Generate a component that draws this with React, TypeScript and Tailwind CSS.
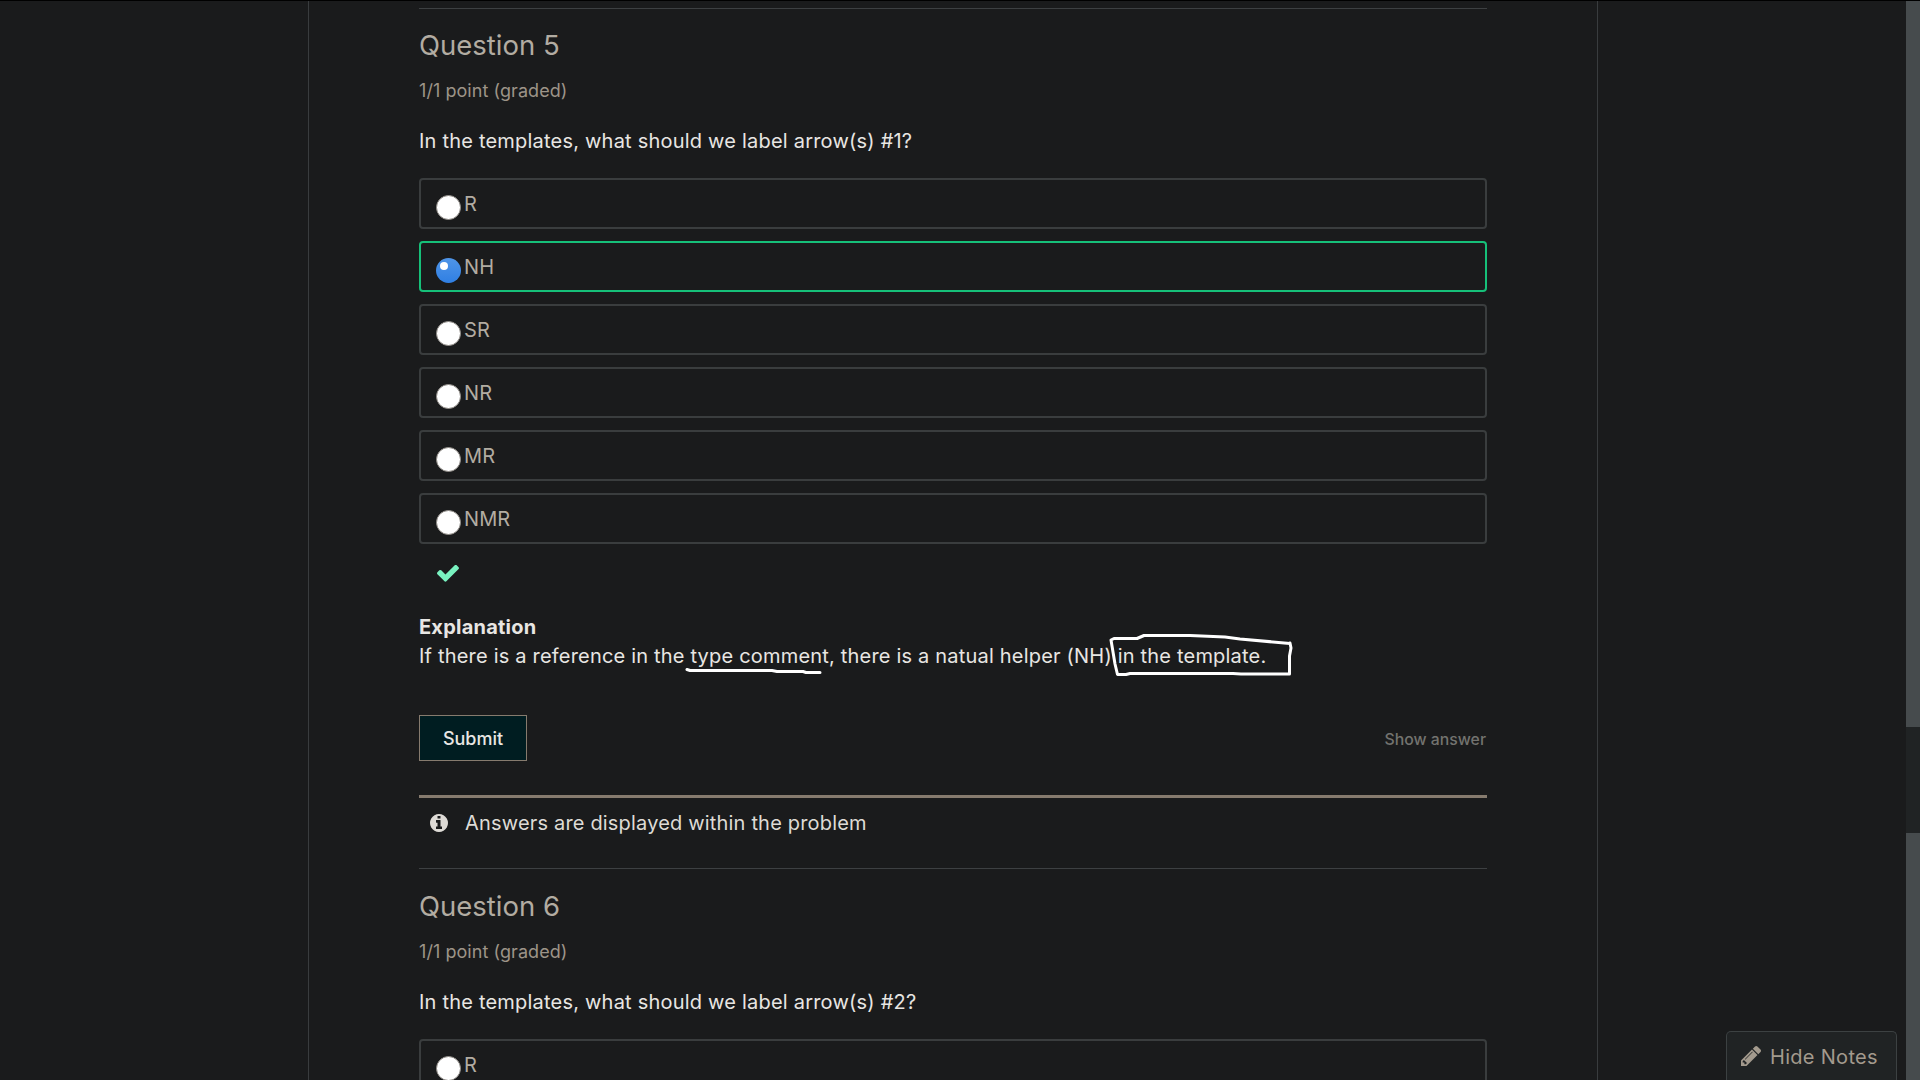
import React from "react";

function CheckIcon({ className }: { className: string }) {
  return (
    <svg className={className} viewBox="121 370 1550 1152" fill="currentColor">
      <path d="M1671 566q0 40-28 68l-724 724-136 136q-28 28-68 28t-68-28l-136-136-362-362q-28-28-28-68t28-68l136-136q28-28 68-28t68 28l294 295 656-657q28-28 68-28t68 28l136 136q28 28 28 68z" />
    </svg>
  );
}

function InfoIcon({ className }: { className: string }) {
  return (
    <svg className={className} viewBox="128 128 1536 1536" fill="currentColor">
      <path d="M1152 1376v-160q0-14-9-23t-23-9h-96v-512q0-14-9-23t-23-9h-320q-14 0-23 9t-9 23v160q0 14 9 23t23 9h96v320h-96q-14 0-23 9t-9 23v160q0 14 9 23t23 9h448q14 0 23-9t9-23zm-128-896v-160q0-14-9-23t-23-9h-192q-14 0-23 9t-9 23v160q0 14 9 23t23 9h192q14 0 23-9t9-23zm640 416q0 209-103 385.5t-279.500 279.500-385.500 103-385.500-103-279.500-279.500-103-385.500 103-385.500 279.500-279.500 385.500-103 385.500 103 279.500 279.500 103 385.500z" />
    </svg>
  );
}

function PencilIcon({ className }: { className: string }) {
  return (
    <svg className={className} viewBox="128 149 1515 1515" fill="currentColor">
      <path d="M491 1536l91-91-235-235-91 91v107h128v128h107zm523-928q0-22-22-22-10 0-17 7l-542 542q-7 7-7 17 0 22 22 22 10 0 17-7l542-542q7-7 7-17zm-54-192l416 416-832 832h-416v-416zm683 96q0 53-37 90l-166 166-416-416 166-165q36-38 90-38 53 0 91 38l235 234q37 39 37 91z" />
    </svg>
  );
}

function Option({ label, selected = false }: { label: string; selected?: boolean }) {
  return (
    <label
      className={
        "flex h-[51px] shrink-0 items-start rounded-[4px] border-2 pl-[15px] " +
        (selected ? "border-[#16c079]" : "border-[#3a3d3e]")
      }
    >
      {selected ? (
        <span className="mt-[15px] h-[25px] w-[25px] shrink-0 rounded-full bg-linear-to-b from-[#4f95e8] to-[#2f7fe3] pt-1 pl-1">
          <span className="block h-2 w-2 rounded-full bg-white" />
        </span>
      ) : (
        <span className="mt-[15px] h-[25px] w-[25px] shrink-0 rounded-full border border-[#8f8b86] bg-white" />
      )}
      <span className="ml-[3px] pt-[9px] text-[20px] leading-[30px] tracking-[0.1px] text-[#b2aca2]">{label}</span>
    </label>
  );
}

function QuestionHead({ title, prompt }: { title: string; prompt: string }) {
  return (
    <>
      <h3 className="mt-[19px] h-[34px] text-[27.5px] leading-[34px] font-normal text-[#b2aca2]">{title}</h3>
      <div className="mt-[15px] h-[28px] text-[18px] leading-[28px] tracking-[0.06px] text-[#9d9488]">1/1 point (graded)</div>
      <p className="mt-[21px] mb-[22px] h-[30px] text-[20px] leading-[30px] tracking-[0.21px] text-[#e8e6e3]">{prompt}</p>
    </>
  );
}

export default function App() {
  return (
    <div className="relative flex h-[1080px] w-[1920px] overflow-hidden border-t border-black bg-[#1a1b1c] font-['Inter',sans-serif] [font-optical-sizing:none]">
      <div className="flex flex-1 justify-start pl-[308px]">
        <main className="flex w-[1290px] flex-col border-x border-[#393c3e] pr-[110px] pl-[110px]">
          <section className="flex h-[860px] shrink-0 flex-col pt-[7px]">
            <div className="h-px shrink-0 bg-[#3d4042]" />
            <QuestionHead title="Question 5" prompt="In the templates, what should we label arrow(s) #1?" />
            <div className="flex flex-col gap-3">
              <Option label="R" />
              <Option label="NH" selected />
              <Option label="SR" />
              <Option label="NR" />
              <Option label="MR" />
              <Option label="NMR" />
            </div>
            <CheckIcon className="mt-[21px] ml-[18px] h-[17px] w-[22px] shrink-0 text-[#79f2c0]" />
            <div className="relative mt-[30px] text-[20px] leading-[30px] text-[#e8e6e3]">
              <div className="h-[29px] font-bold tracking-[0.22px]">Explanation</div>
              <div className="h-[30px] tracking-[0.195px] whitespace-nowrap">
                If there is a reference in the type comment, there is a natual helper (NH) in the template.
              </div>
              <svg className="absolute top-0 left-0 h-[70px] w-[900px]" viewBox="419 612 900 70" fill="none" stroke="#fff" strokeWidth="3" strokeLinecap="round" strokeLinejoin="round">
                <path d="M687 669.5L690 670.5H772L777 671.5H803L806 672.5H820" />
                <path d="M1290 643L1291 648L1289.500 656V674H1241L1233 673.500H1130L1126 674.500H1117.500L1115 664L1111 640L1114 638.500H1137L1144 635.500H1190L1225 637L1240 639L1290 643.500" />
              </svg>
            </div>
            <div className="mt-[44px] flex h-[46px] items-center justify-between">
              <button className="h-[46px] w-[108px] border border-[#867b6e] bg-[#001d21] text-[18px] font-medium text-[#e8e6e3]">Submit</button>
              <button className="pt-[3px] pr-px text-[15.8px] font-medium text-[#73736f]">Show answer</button>
            </div>
            <div className="mt-[34px] flex h-[53px] shrink-0 items-center border-t-[3px] border-[#867b6e] pl-[11px] text-[#dedbd6]">
              <InfoIcon className="h-[18px] w-[18px]" />
              <span className="ml-[17px] text-[20px] tracking-[0.18px]">Answers are displayed within the problem</span>
            </div>
          </section>
          <section className="flex shrink-0 flex-col pt-[7px]">
            <div className="mb-px h-px shrink-0 bg-[#3d4042]" />
            <QuestionHead title="Question 6" prompt="In the templates, what should we label arrow(s) #2?" />
            <Option label="R" />
          </section>
        </main>
      </div>
      <div className="flex w-[14px] flex-col bg-[#202324]">
        <div className="h-[726px] bg-[#464b4d]" />
        <div className="mt-[106px] flex-1 bg-[#464b4d]" />
      </div>
      <button className="absolute right-[23px] bottom-0 flex h-[49px] w-[171px] items-start rounded-t-[5px] border border-b-0 border-[#3c4142] bg-[#202324] pt-[10px] pl-[14px] text-[20px] leading-[30px] text-[#a39a8d]">
        <PencilIcon className="mt-1 h-[20px] w-[20px]" />
        <span className="ml-[9px] tracking-[0.3px]">Hide Notes</span>
      </button>
    </div>
  );
}
